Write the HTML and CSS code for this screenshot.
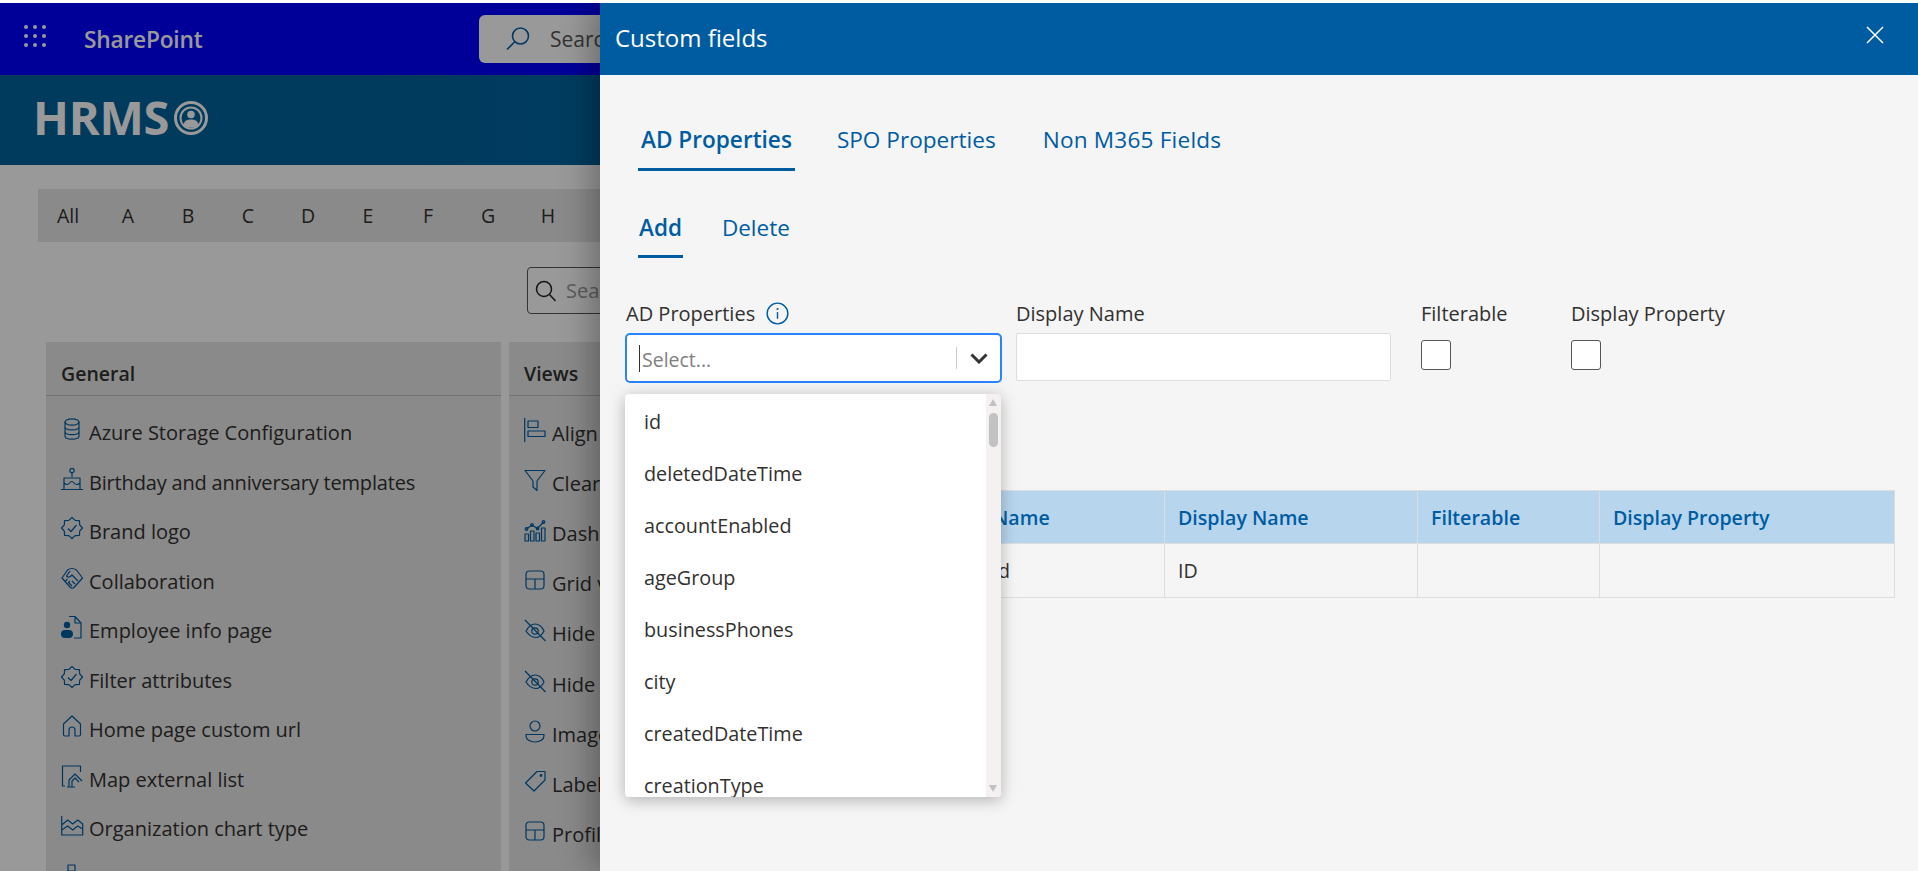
FILE: index.html
```html
<!DOCTYPE html>
<html lang="en">
<head>
<meta charset="utf-8">
<title>HRMS - Custom fields</title>
<link rel="stylesheet" href="styles.css">
</head>
<body>
<svg class="defs" width="0" height="0" aria-hidden="true">
  <symbol id="i-badge" viewBox="0 0 22 24"><path d="M21.5 12 18.67 15.18 18.42 19.42 14.18 19.67 11 22.5 7.82 19.67 3.58 19.42 3.33 15.18.5 12 3.33 8.82 3.58 4.58 7.82 4.33 11 1.5 14.18 4.33 18.42 4.58 18.67 8.82Z"/><path d="M7 12.5l3 3 5.5-6.5"/></symbol>
  <symbol id="i-eye" viewBox="0 0 22 24"><path d="M2 13c2.500-4.500 5.500-7 9-7s7 2.500 9 7c-2 4-5 6.500-8 6.500-4 0-7.500-2.500-10-6.500z"/><circle cx="11" cy="13" r="3.200"/><path d="M1 2l20.500 21"/></symbol>
  <symbol id="i-grid" viewBox="0 0 22 24"><rect x="2" y="3" width="18" height="18" rx="3.500"/><path d="M2 11h18M11 11v10"/></symbol>
</svg>
<div class="page">
  <header class="suitebar">
    <svg class="waffle" viewBox="0 0 22 22"><g><circle cx="2" cy="2" r="2"/><circle cx="11" cy="2" r="2"/><circle cx="20" cy="2" r="2"/><circle cx="2" cy="11" r="2"/><circle cx="11" cy="11" r="2"/><circle cx="20" cy="11" r="2"/><circle cx="2" cy="20" r="2"/><circle cx="11" cy="20" r="2"/><circle cx="20" cy="20" r="2"/></g></svg>
    <span class="brand">SharePoint</span>
    <div class="suite-search">
      <svg class="suite-search-icon" viewBox="0 0 24 24"><circle cx="14.500" cy="9" r="8"/><path d="M8.800 14.700 1 22.500"/></svg>
      <span>Search this site</span>
    </div>
  </header>
  <div class="sitebar">
    <span class="logo-text">HRMS</span>
    <svg class="logo-icon" viewBox="0 0 34 34"><circle class="ring" cx="17" cy="17" r="15.500"/><circle class="ring2" cx="17" cy="17" r="10.500"/><circle class="fill" cx="17" cy="13.500" r="3.800"/><path class="fill" d="M9.800 24c0-3.800 3-5.500 7.200-5.500s7.200 1.700 7.200 5.500c-2 1.800-4.500 2.500-7.200 2.500s-5.200-.7-7.200-2.500z"/></svg>
  </div>
  <nav class="alpha">
    <span>All</span><span>A</span><span>B</span><span>C</span><span>D</span><span>E</span><span>F</span><span>G</span><span>H</span><span>I</span><span>J</span><span>K</span><span>L</span>
  </nav>
  <div class="search-row">
    <div class="settings-search">
      <svg class="settings-search-icon" viewBox="0 0 22 22"><circle cx="9" cy="9" r="7.500"/><path d="M14.500 14.500 20.500 21"/></svg>
      <span>Search</span>
    </div>
  </div>
  <main class="cards">
    <section class="card">
      <h2 class="card-title">General</h2>
      <ul class="links">
        <li><svg class="ic" viewBox="0 0 22 24"><ellipse cx="11" cy="5" rx="7" ry="3.200"/><path d="M4 5v14c0 1.800 3 3.200 7 3.200s7-1.400 7-3.200V5M4 9.700c0 1.800 3 3.200 7 3.200s7-1.400 7-3.200M4 14.400c0 1.800 3 3.200 7 3.200s7-1.400 7-3.200"/></svg>Azure Storage Configuration</li>
        <li><svg class="ic" viewBox="0 0 22 24"><circle cx="11" cy="3.500" r="2.200"/><path d="M11 6v4M3 22V11h16v11M3 16c2.500 2 4 2 5.500 0s3-2 4.500 0 4 2 6 0M0 22.500h22"/></svg><span class="tight">Birthday and anniversary templates</span></li>
        <li><svg class="ic"><use href="#i-badge"/></svg>Brand logo</li>
        <li><svg class="ic" viewBox="0 0 22 24"><path d="M1 12 6.500 4Q11 1 15.500 4L21.500 12 13 21.500Q11 23 9 21ZM9 5 5.500 10Q8 12.500 11 9L17 15M14 18l-3-3M11 20l-3-3M6.500 13l-2 2M9 15l-2 2"/></svg>Collaboration</li>
        <li><svg class="ic" viewBox="0 0 22 24"><path d="M8 1.500h6l6 6.500v15h-7M14 1.500V8h6"/><circle class="solid" cx="6" cy="10" r="3.200"/><rect class="solid" x="0" y="15" width="12" height="8" rx="4"/></svg>Employee info page</li>
        <li><svg class="ic"><use href="#i-badge"/></svg>Filter attributes</li>
        <li><svg class="ic" viewBox="0 0 22 24"><path d="M11 2 2.500 10v10.500Q2.500 22 4 22H8v-6a3 3 0 016 0v6h4q1.500 0 1.500-1.500V10Z"/></svg>Home page custom url</li>
        <li><svg class="ic" viewBox="0 0 22 24"><path d="M4 22H1.500V2h18v6M8 23v-7l6-6 7 7M11 23v-6l3-3 4 4M6 23h8"/></svg>Map external list</li>
        <li><svg class="ic" viewBox="0 0 22 24"><path d="M.7 3v19h21V11l-5-4-5 4-5-4-6 5M.7 17l6-4 5 4 5-4 5 3"/></svg>Organization chart type</li>
        <li><svg class="ic" viewBox="0 0 22 24"><rect x="7" y="2" width="7" height="6"/><path d="M10.500 8v6"/></svg>Organization</li>
      </ul>
    </section>
    <section class="card">
      <h2 class="card-title">Views</h2>
      <ul class="links tall">
        <li><svg class="ic" viewBox="0 0 22 24"><path d="M.7 0v24"/><rect x="4" y="3" width="10" height="6.500"/><rect x="4" y="13" width="17" height="5.500"/></svg>Align</li>
        <li><svg class="ic" viewBox="0 0 22 24"><path d="M1 2.500h20l-8 10.500v9.500l-4-3.500v-6z"/></svg>Clear</li>
        <li><svg class="ic" viewBox="0 0 22 24"><path d="M1 16h3.500v7H1zM6.500 13H10v10H6.500zM12 15h3.500v8H12zM17.500 10H21v13h-3.500zM2.500 11 8 7l5.500 3.500L19.500 4"/><circle cx="2.500" cy="11" r="1.300"/><circle cx="8" cy="7" r="1.300"/><circle cx="13.500" cy="10.500" r="1.300"/><circle cx="19.500" cy="4" r="1.300"/></svg>Dash</li>
        <li><svg class="ic"><use href="#i-grid"/></svg>Grid view</li>
        <li><svg class="ic"><use href="#i-eye"/></svg>Hide</li>
        <li><svg class="ic"><use href="#i-eye"/></svg>Hide</li>
        <li><svg class="ic" viewBox="0 0 22 24"><circle cx="11" cy="7" r="5"/><path d="M2 15.500h18v1.500c0 3.500-4 6-9 6s-9-2.500-9-6z"/></svg>Image</li>
        <li><svg class="ic" viewBox="0 0 22 24"><path d="M1.500 14 13 2.500h8v8.500L10 22z"/><circle cx="17" cy="6.500" r=".8"/></svg>Label</li>
        <li><svg class="ic"><use href="#i-grid"/></svg>Profile</li>
      </ul>
    </section>
    <section class="card"></section>
  </main>
</div>

<div class="overlay"></div>

<aside class="panel">
  <header class="panel-head">
    <h1 class="panel-title">Custom fields</h1>
    <svg class="close" viewBox="0 0 18 18"><path d="M1 1l16 16M17 1 1 17"/></svg>
  </header>
  <div class="tabs">
    <span class="tab active">AD Properties</span>
    <span class="tab">SPO Properties</span>
    <span class="tab wide">Non M365 Fields</span>
  </div>
  <div class="subtabs">
    <span class="tab active">Add</span>
    <span class="tab">Delete</span>
  </div>
  <form class="form">
    <div class="field">
      <label class="lbl">AD Properties <svg class="info" viewBox="0 0 24 24"><circle cx="12" cy="12" r="10.800"/><path d="M12 10.500v7"/><circle class="dot" cx="12" cy="7.300" r="1.100"/></svg></label>
      <div class="select-wrap">
        <div class="select">
          <i class="caret"></i>
          <span class="placeholder">Select...</span>
          <i class="sep"></i>
          <svg class="chev" viewBox="0 0 18 11"><path d="M1.500 1.500 9 9l7.500-7.500"/></svg>
        </div>
        <div class="menu">
          <ul class="options">
            <li>id</li><li>deletedDateTime</li><li>accountEnabled</li><li>ageGroup</li><li>businessPhones</li><li>city</li><li>createdDateTime</li><li>creationType</li>
          </ul>
          <div class="scroll">
            <i class="arrow up"></i>
            <i class="thumb"></i>
            <i class="arrow down"></i>
          </div>
        </div>
      </div>
    </div>
    <div class="field">
      <label class="lbl plain">Display Name</label>
      <div class="text-input"></div>
    </div>
    <div class="field narrow">
      <label class="lbl plain">Filterable</label>
      <div class="check"></div>
    </div>
    <div class="field narrow">
      <label class="lbl plain">Display Property</label>
      <div class="check"></div>
    </div>
  </form>
  <table class="grid">
    <colgroup><col class="c0"><col class="c1"><col class="c2"><col class="c3"><col class="c4"></colgroup>
    <thead><tr><th></th><th>Name</th><th>Display Name</th><th>Filterable</th><th>Display Property</th></tr></thead>
    <tbody><tr><td></td><td>id</td><td>ID</td><td></td><td></td></tr></tbody>
  </table>
</aside>
</body>
</html>
```

FILE: styles.css
```css
* { box-sizing: border-box; }
html, body { margin: 0; padding: 0; height: 871px; overflow: hidden; background: #fff; }
body { font-family: "Open Sans", "Noto Sans", "Liberation Sans", sans-serif; color: #323130; font-size: 20px; position: relative; }
ul { list-style: none; margin: 0; padding: 0; }
h1, h2 { margin: 0; font-weight: 400; }
.defs { position: absolute; }
.page { padding-top: 3px; width: 1918px; }

.suitebar { height: 72px; background: #0000ff; display: grid; grid-template-columns: 84px 395px 1fr; align-items: center; color: #fff; }
.waffle { width: 22px; height: 22px; margin-left: 24px; fill: #fff; margin-top: -6px; }
.brand { font-size: 22.700px; font-weight: 600; letter-spacing: -.2px; }
.suite-search { height: 48px; width: 600px; background: #fff; border-radius: 6px; display: flex; align-items: center; gap: 20px; padding-left: 27px; color: #555; font-size: 21px; }
.suite-search-icon { width: 24px; height: 24px; fill: none; stroke: #0a5fa8; stroke-width: 1.600; }

.sitebar { height: 90px; background: linear-gradient(90deg, #00619a, #006aa8); display: flex; align-items: center; padding: 0 0 5px 33px; color: #fff; }
.logo-text { font-size: 47px; font-weight: 700; letter-spacing: -.3px; line-height: 1; }
.logo-icon { width: 34px; height: 34px; margin-left: 5px; }
.logo-icon .ring, .logo-icon .ring2 { fill: none; stroke: #fff; }
.logo-icon .ring { stroke-width: 3; }
.logo-icon .ring2 { stroke-width: 2; }
.logo-icon .fill { fill: #fff; }

.alpha { margin: 24px 0 0 38px; height: 53px; width: 1500px; background: #e6e6e6; display: flex; align-items: center; font-size: 19.500px; }
.alpha span { width: 60px; text-align: center; }

.search-row { padding: 25px 0 0 527px; }
.settings-search { width: 320px; height: 47px; border: 1px solid #555; border-radius: 4px; background: #fff; display: flex; align-items: center; gap: 9px; padding-left: 7px; color: #999; font-size: 20px; }
.settings-search-icon { width: 22px; height: 22px; fill: none; stroke: #222; stroke-width: 1.500; }

.cards { display: grid; grid-template-columns: 455px 455px 455px; column-gap: 8px; margin: 28px 0 0 46px; height: 529px; overflow: hidden; }
.card { background: #e6e6e6; }
.card-title { height: 54px; padding-left: 15px; line-height: 63px; font-size: 19.500px; font-weight: 600; border-bottom: 1px solid #bdbdbd; }
.links { padding-top: 12px; }
.links li { height: 49.500px; display: flex; align-items: center; gap: 6px; padding-left: 15px; font-size: 20px; white-space: nowrap; }
.links.tall li { height: 50.200px; }
.tight { letter-spacing: -.18px; }
.ic { width: 22px; height: 24px; flex: none; margin-bottom: 7px; fill: none; stroke: #005ca1; stroke-width: 1.200; stroke-linejoin: round; overflow: visible; }
.ic .solid { fill: #005ca1; stroke: none; }

.overlay { position: absolute; left: 0; right: 0; top: 3px; bottom: 0; background: rgba(0, 0, 0, .4); }

.panel { position: absolute; left: 600px; right: 0; top: 3px; bottom: 0; background: #f5f5f5; box-shadow: -8px 0 30px rgba(0, 0, 0, .3); clip-path: inset(0 0 0 -60px); }
.panel-head { height: 72px; background: #005ca1; color: #fff; display: flex; align-items: center; justify-content: space-between; padding: 0 34px 0 15px; }
.panel-title { font-size: 24px; margin-top: -4px; }
.close { width: 18px; height: 18px; margin-top: -9px; fill: none; stroke: #fff; stroke-width: 1.500; }

.tabs, .subtabs { display: flex; color: #005ca1; padding-left: 38px; line-height: 30px; }
.tabs { margin-top: 50px; gap: 39px; font-size: 22.600px; }
.subtabs { margin-top: 42px; gap: 38px; font-size: 22.500px; }
.tab { padding: 0 3px 13px; border-bottom: 3px solid transparent; white-space: nowrap; }
.tab.wide { margin-left: 2px; letter-spacing: .2px; }
.subtabs .tab { padding: 1px 1px 13px; line-height: 28px; }
.tab.active { font-weight: 600; border-bottom-color: #005ca1; }

.form { display: grid; grid-template-columns: 391px 405px 150px 200px; margin: 43px 0 0 25px; }
.field { min-width: 0; }
.lbl { display: flex; align-items: center; gap: 11px; height: 24px; margin-bottom: 8px; padding-left: 1px; font-size: 20px; color: #323130; white-space: nowrap; }
.lbl.plain { padding-left: 0; }
.info { width: 23px; height: 23px; fill: none; stroke: #005ca1; stroke-width: 1.500; }
.info .dot { fill: #005ca1; stroke: none; }
.select-wrap { position: relative; width: 377px; }
.select { height: 50px; border: 2px solid #2684ff; border-radius: 5px; background: #fff; display: flex; align-items: center; padding-left: 12px; }
.caret { width: 1px; height: 27px; background: #333; }
.placeholder { margin-left: 2px; color: #808080; font-size: 19.500px; flex: 1; padding-top: 2px; }
.sep { width: 1px; height: 22px; background: #ccc; margin-right: 13px; }
.chev { width: 18px; height: 11px; margin-right: 12px; fill: none; stroke: #333; stroke-width: 3; }
.text-input { width: 375px; height: 48px; background: #fff; border: 1px solid #ddd; border-radius: 2px; }
.check { width: 30px; height: 30px; margin-top: 15px; background: #fff; border: 1px solid #555; border-radius: 3px; }

.menu { position: absolute; left: 0; top: 61px; width: 376px; height: 403px; background: #fff; border-radius: 4px; overflow: hidden; box-shadow: 0 3px 16px rgba(0, 0, 0, .28); z-index: 2; }
.options { padding-top: 1px; }
.options li { height: 52.100px; padding-left: 19px; display: flex; align-items: center; font-size: 19.800px; color: #323130; }
.scroll { position: absolute; right: 0; top: 0; bottom: 0; width: 15px; background: #f5f1f0; }
.thumb { position: absolute; left: 3px; top: 19px; width: 9px; height: 34px; border-radius: 5px; background: #c2c2c2; }
.arrow { position: absolute; left: 3px; width: 0; height: 0; border-left: 4.500px solid transparent; border-right: 4.500px solid transparent; }
.arrow.up { top: 5px; border-bottom: 7px solid #c2c2c2; }
.arrow.down { bottom: 5px; border-top: 7px solid #c2c2c2; }

.grid { margin: 107px 0 0 25px; width: 1269px; table-layout: fixed; border-collapse: collapse; font-size: 19.600px; }
.c0 { width: 354px; } .c1 { width: 185px; } .c2 { width: 253px; } .c3 { width: 182px; } .c4 { width: 295px; }
.grid th, .grid td { height: 54px; padding: 0 13px; text-align: left; border: 1px solid #ddd; }
.grid th { height: 53px; background: #b8d5ee; color: #005ca1; font-weight: 600; }
```
